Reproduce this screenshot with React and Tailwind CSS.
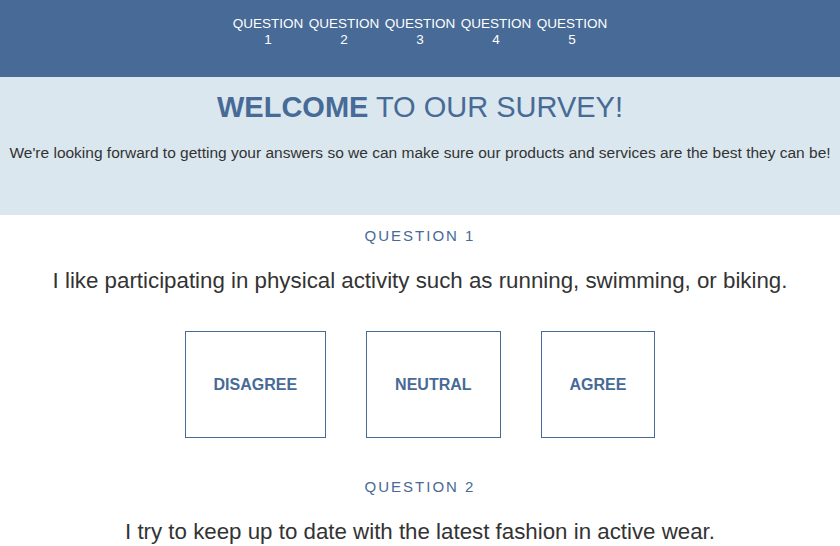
const QUESTIONS = [1, 2, 3, 4, 5];

const ITEMS = [
  {
    label: "QUESTION 1",
    text: "I like participating in physical activity such as running, swimming, or biking.",
  },
  {
    label: "QUESTION 2",
    text: "I try to keep up to date with the latest fashion in active wear.",
  },
];

const ANSWERS = ["DISAGREE", "NEUTRAL", "AGREE"];

export default function App() {
  return (
    <div className="min-h-screen bg-white font-['Liberation_Sans',Arial,sans-serif] text-[#333]">
      <nav className="flex h-[77px] justify-center gap-[6px] bg-[#476a96] pt-[16px]">
        {QUESTIONS.map((n) => (
          <a
            key={n}
            href="#"
            className="flex w-[70px] flex-col items-center text-[13.5px] leading-[16px] text-white"
          >
            <span>QUESTION</span>
            <span>{n}</span>
          </a>
        ))}
      </nav>

      <header className="h-[138px] bg-[#dae7ee] pt-[13px] text-center">
        <h1 className="text-[29px] leading-[34px] text-[#476a96]">
          <span className="font-bold">WELCOME</span> TO OUR SURVEY!
        </h1>
        <p className="mt-[19px] text-[15.5px] leading-[20px]">
          We're looking forward to getting your answers so we can make sure our
          products and services are the best they can be!
        </p>
      </header>

      <main className="flex flex-col items-center pt-[11px]">
        {ITEMS.map((item, i) => (
          <section key={item.label} className="flex flex-col items-center">
            <h2 className="text-[15px] leading-[20px] tracking-[2px] text-[#476a96]">
              {item.label}
            </h2>
            <p className="mt-[22px] whitespace-nowrap text-[22.3px] leading-[26px]">
              {item.text}
            </p>
            {i === 0 && (
              <div className="mb-[39px] mt-[37px] flex gap-[40px]">
                {ANSWERS.map((a) => (
                  <button
                    key={a}
                    className="h-[107px] border border-[#476a96] px-[28px] text-[16px] font-bold text-[#476a96]"
                  >
                    {a}
                  </button>
                ))}
              </div>
            )}
          </section>
        ))}
      </main>
    </div>
  );
}
